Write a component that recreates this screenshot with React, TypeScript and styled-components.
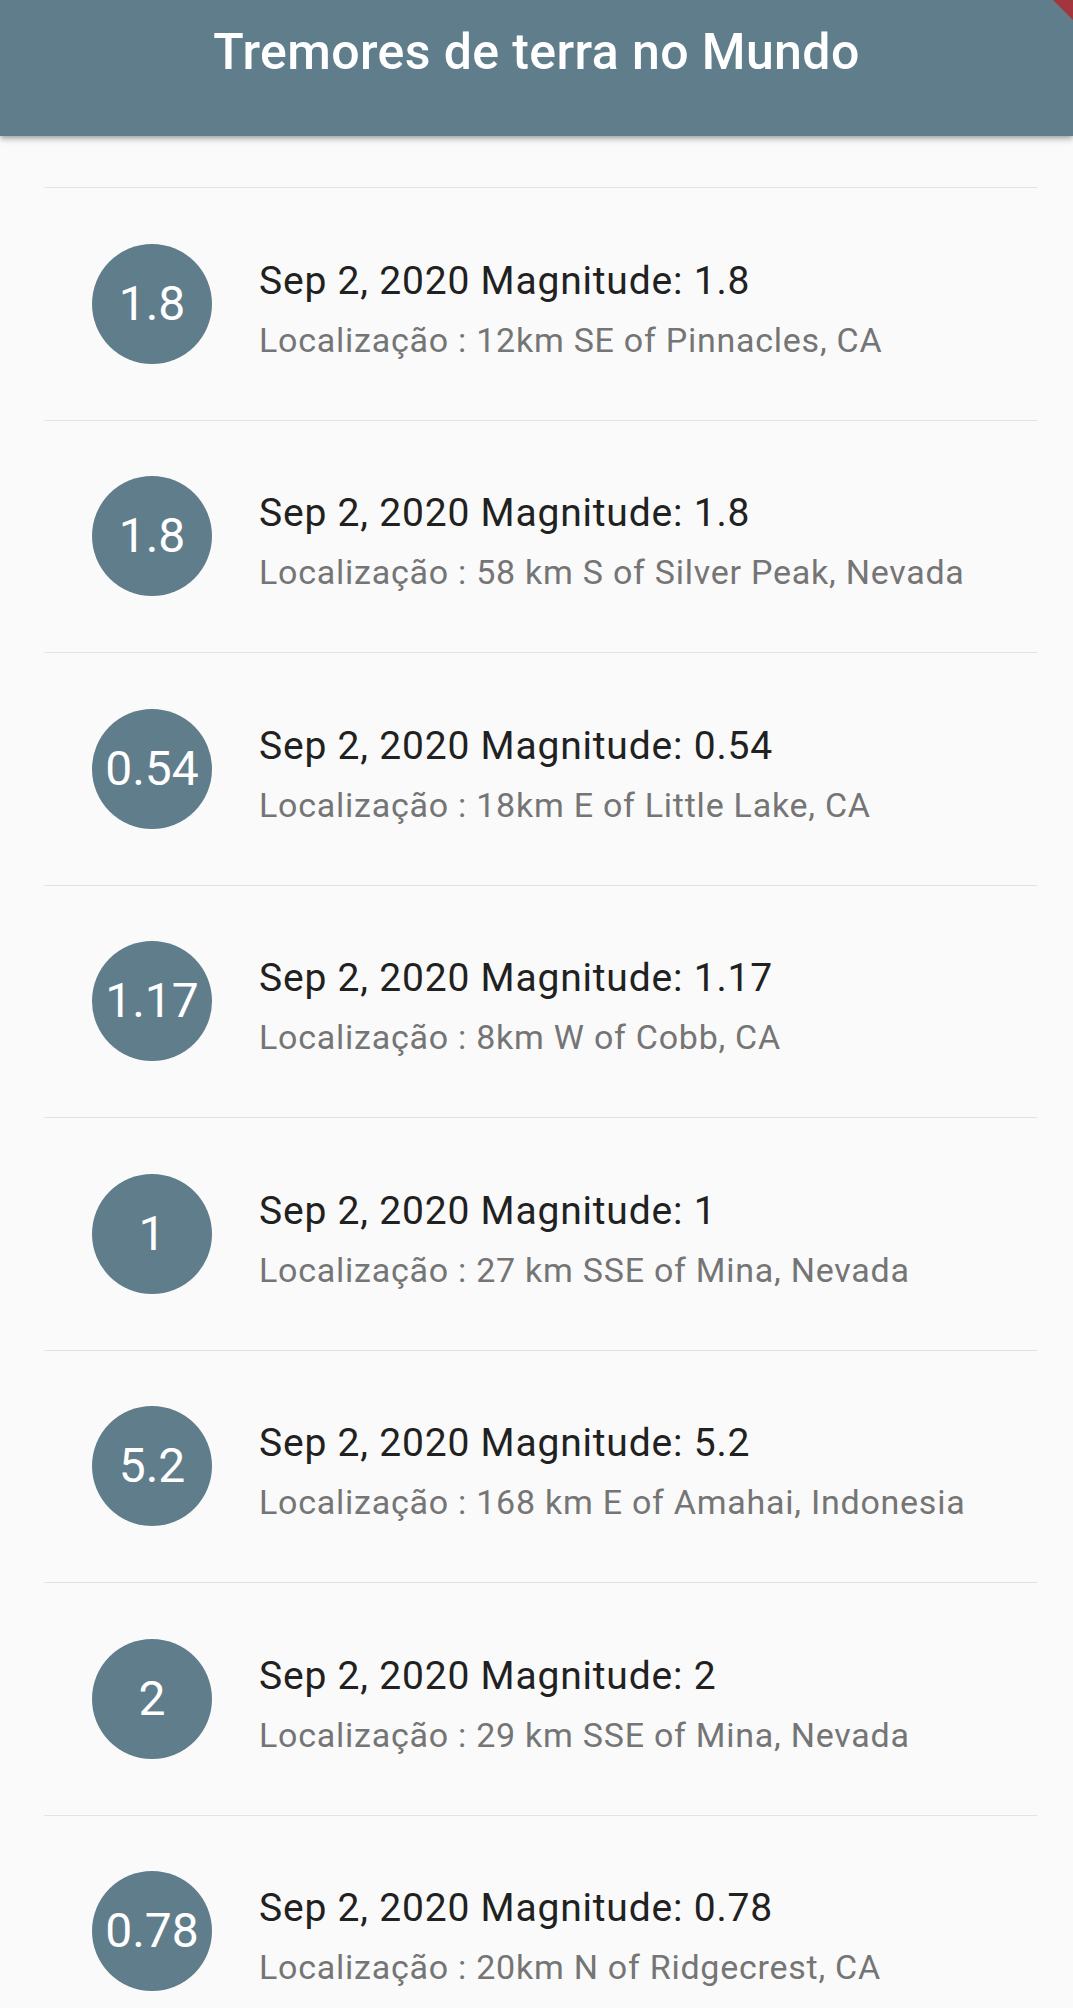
import React from "react";
import styled, { createGlobalStyle } from "styled-components";

declare interface Quake {
    mag: string;
    place: string;
}

const quakes: Quake[] = [
    { mag: "1.8", place: "12km SE of Pinnacles, CA" },
    { mag: "1.8", place: "58 km S of Silver Peak, Nevada" },
    { mag: "0.54", place: "18km E of Little Lake, CA" },
    { mag: "1.17", place: "8km W of Cobb, CA" },
    { mag: "1", place: "27 km SSE of Mina, Nevada" },
    { mag: "5.2", place: "168 km E of Amahai, Indonesia" },
    { mag: "2", place: "29 km SSE of Mina, Nevada" },
    { mag: "0.78", place: "20km N of Ridgecrest, CA" },
];

function App(): React.ReactElement {
    return (
        <Page>
            <GlobalStyle />
            <AppBar>
                <Title>Tremores de terra no Mundo</Title>
                <DebugCorner />
            </AppBar>
            <List>
                {quakes.map((q, i) => (
                    <Item key={i}>
                        <Divider />
                        <Tile>
                            <Avatar>{q.mag}</Avatar>
                            <Info>
                                <Headline>Sep 2, 2020 Magnitude: {q.mag}</Headline>
                                <Place>Localização : {q.place}</Place>
                            </Info>
                        </Tile>
                    </Item>
                ))}
            </List>
        </Page>
    );
}

export default App;

const GlobalStyle = createGlobalStyle`
  html, body {
    margin: 0;
    padding: 0;
    overflow: hidden;
    background: #fafafa;
  }
  body {
    font-family: Roboto, "Noto Sans", sans-serif;
  }
`;

const Page = styled.div`
  width: 1073px;
  height: 2008px;
  overflow: hidden;
  background: #fafafa;
`;

const AppBar = styled.header`
  position: relative;
  z-index: 2;
  height: 136px;
  box-sizing: border-box;
  padding-top: 27px;
  display: flex;
  justify-content: center;
  align-items: flex-start;
  background: #607d8b;
  box-shadow: 0 2px 4px -1px rgba(0, 0, 0, 0.2), 0 4px 5px 0 rgba(0, 0, 0, 0.14),
    0 1px 10px 0 rgba(0, 0, 0, 0.12);
  overflow: hidden;
`;

const Title = styled.h1`
  margin: 0;
  font-size: 50px;
  line-height: 50px;
  font-weight: 500;
  letter-spacing: 0.4px;
  color: #ffffff;
`;

const DebugCorner = styled.div`
  position: absolute;
  top: 0;
  right: 0;
  width: 20px;
  height: 20px;
  background: #a3363d;
  clip-path: polygon(0 0, 100% 0, 100% 100%);
`;

const List = styled.main`
  padding: 51px 36px 0 44px;
`;

const Item = styled.section`
  display: flex;
  flex-direction: column;
`;

const Divider = styled.div`
  height: 1px;
  background: #e3e3e3;
`;

const Tile = styled.div`
  height: 231.5px;
  display: flex;
  align-items: center;
  padding-left: 48px;
`;

const Avatar = styled.div`
  flex: none;
  width: 120px;
  height: 120px;
  border-radius: 50%;
  background: #607d8b;
  color: #ffffff;
  display: flex;
  align-items: center;
  justify-content: center;
  font-size: 48px;
  line-height: 1;
`;

const Info = styled.div`
  display: flex;
  flex-direction: column;
  margin-left: 47px;
  padding-top: 10px;
`;

const Headline = styled.span`
  font-size: 39px;
  line-height: 46px;
  letter-spacing: 0.8px;
  color: #212121;
`;

const Place = styled.span`
  margin-top: 16px;
  font-size: 34px;
  line-height: 40px;
  letter-spacing: 0.75px;
  color: #757575;
`;
